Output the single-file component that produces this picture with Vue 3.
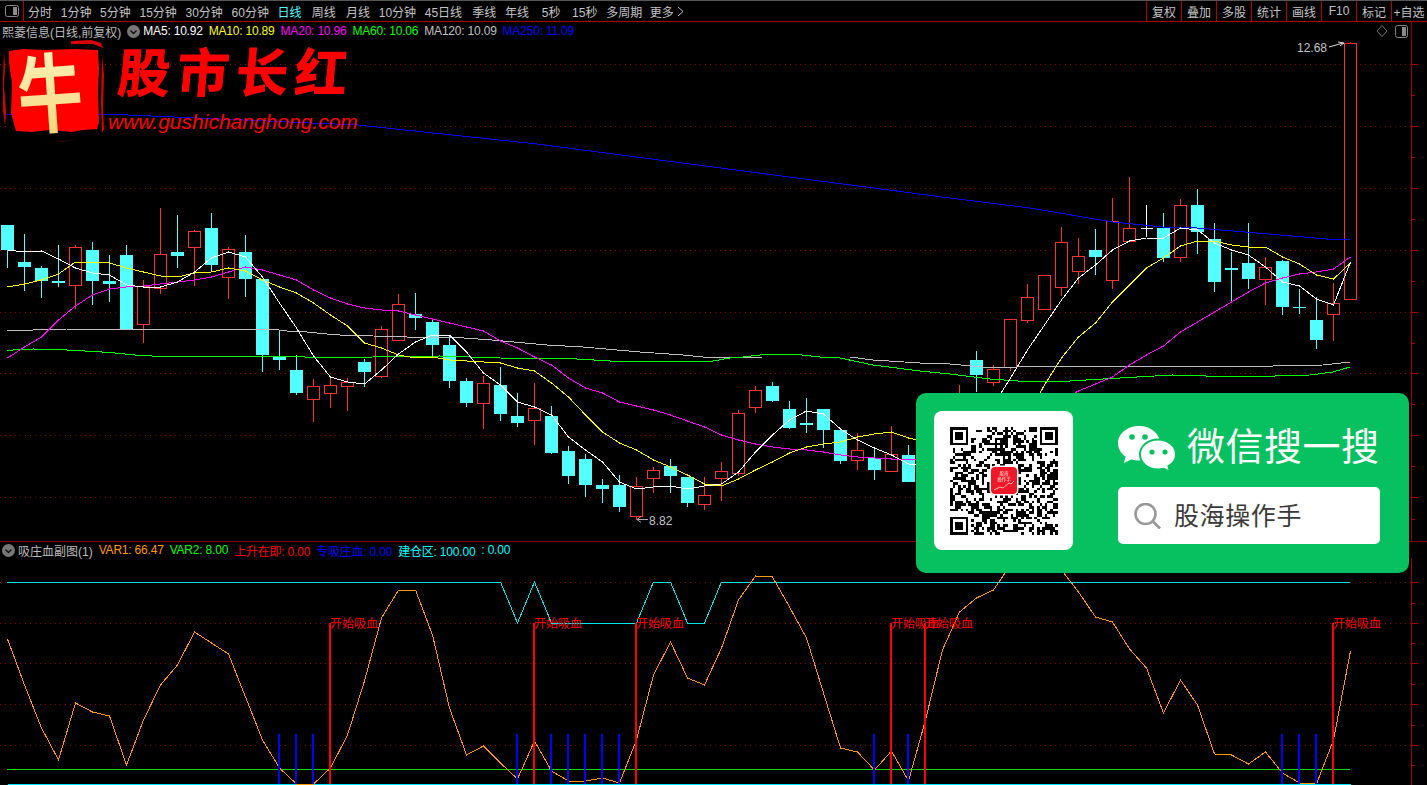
<script setup>
import { computed } from 'vue';

const periods = [
  { name: '分时' }, { name: '1分钟' }, { name: '5分钟' }, { name: '15分钟' }, { name: '30分钟' }, { name: '60分钟' },
  { name: '日线', cls: 'active' }, { name: '周线', cls: 'nudge' }, { name: '月线', cls: 'nudge' }, { name: '10分钟' },
  { name: '45日线' }, { name: '季线', cls: 'nudge' }, { name: '年线' }, { name: '5秒', cls: 'sec-a' }, { name: '15秒', cls: 'sec-b' }, { name: '多周期' },
];
const tools = ['复权', '叠加', '多股', '统计', '画线', 'F10', '标记', '+自选'];

const maLegend = [
  { text: 'MA5: 10.92', color: '#ffffff' },
  { text: 'MA10: 10.89', color: '#ffff00' },
  { text: 'MA20: 10.96', color: '#ff00ff' },
  { text: 'MA60: 10.06', color: '#00ff00' },
  { text: 'MA120: 10.09', color: '#c0c0c0' },
  { text: 'MA250: 11.09', color: '#0000ff' },
];

const subLegend = [
  { text: 'VAR1: 66.47', color: '#ff9900' },
  { text: 'VAR2: 8.00', color: '#00ff00' },
  { text: '上升在即: 0.00', color: '#ff0000' },
  { text: '专吸庄血: 0.00', color: '#0000ff' },
  { text: '建仓区: 100.00', color: '#00ffff' },
  { text: ': 0.00', color: '#00ffff' },
];

// 每根K线: [类型, 上影, 实体顶, 实体底, 下影]  c青 r红 w白
const candles = [
  ['c', 225, 225, 250, 268], ['c', 234, 262, 267, 291], ['c', 266, 268, 281, 298], ['c', 245, 281, 283, 287],
  ['r', 245, 247, 285, 309], ['c', 242, 250, 281, 305], ['c', 255, 281, 284, 302], ['c', 245, 255, 329, 329],
  ['r', 280, 286, 324, 343], ['r', 208, 254, 288, 294], ['c', 215, 252, 256, 268], ['r', 230, 231, 247, 286],
  ['c', 213, 228, 265, 272], ['r', 247, 249, 277, 299], ['c', 235, 252, 279, 297], ['c', 279, 279, 355, 372],
  ['c', 331, 356, 360, 370], ['c', 355, 370, 393, 395], ['r', 379, 386, 399, 422], ['r', 377, 385, 393, 408],
  ['r', 378, 382, 386, 411], ['c', 359, 362, 372, 387], ['r', 326, 329, 376, 378], ['r', 294, 304, 340, 340],
  ['c', 293, 314, 318, 330], ['c', 318, 322, 345, 357], ['c', 335, 345, 381, 388], ['c', 378, 381, 403, 407],
  ['r', 376, 383, 403, 429], ['c', 367, 385, 414, 421], ['c', 393, 416, 423, 427], ['r', 383, 408, 420, 445],
  ['c', 406, 416, 453, 454], ['c', 446, 451, 476, 484], ['c', 454, 459, 485, 497], ['c', 479, 485, 489, 503],
  ['c', 475, 485, 507, 512], ['r', 477, 486, 516, 520], ['r', 467, 470, 478, 493], ['c', 459, 466, 476, 493],
  ['c', 477, 477, 503, 507], ['r', 477, 495, 504, 510], ['r', 462, 471, 478, 501], ['r', 410, 413, 473, 476],
  ['r', 386, 390, 407, 413], ['c', 382, 386, 401, 402], ['c', 401, 409, 428, 429], ['c', 398, 423, 425, 433],
  ['c', 409, 409, 430, 448], ['c', 430, 430, 461, 464], ['r', 433, 450, 460, 470], ['c', 447, 458, 470, 480],
  ['r', 426, 454, 471, 471], ['c', 445, 455, 482, 482], ['r', 440, 450, 470, 480], ['c', 430, 440, 470, 490],
  ['r', 385, 410, 440, 450], ['c', 351, 360, 375, 392], ['r', 365, 369, 382, 386], ['r', 319, 319, 367, 371],
  ['r', 284, 297, 320, 323], ['r', 275, 275, 309, 309], ['r', 227, 242, 287, 296], ['r', 238, 256, 271, 284],
  ['c', 229, 250, 257, 275], ['r', 198, 221, 280, 289], ['r', 177, 228, 241, 241], ['w', 205, 228, 229, 237],
  ['c', 213, 228, 258, 262], ['r', 199, 205, 257, 262], ['c', 189, 205, 232, 254], ['c', 223, 239, 282, 292],
  ['c', 252, 268, 270, 303], ['c', 223, 263, 279, 289], ['r', 257, 267, 279, 305], ['c', 260, 261, 307, 315],
  ['c', 289, 307, 308, 314], ['c', 297, 320, 340, 349], ['r', 283, 303, 314, 341], ['r', 42, 43, 299, 299],
];

const cx = (i) => 7.5 + 17 * i;
const toPoints = (ys) => ys.map((y, i) => `${cx(i)},${y}`).join(' ');
const pairs = (arr) => arr.map((p) => p.join(',')).join(' ');

const ma5 = toPoints([250, 252, 251, 259, 268, 273, 275, 285, 287, 287, 282, 272, 258, 252, 257, 277, 303, 328, 356, 377, 382, 384, 370, 354, 342, 335, 335, 352, 373, 385, 402, 407, 415, 437, 450, 462, 482, 489, 487, 486, 489, 486, 484, 472, 452, 435, 420, 411, 414, 429, 440, 448, 455, 464, 465, 460, 450, 430, 405, 378, 350, 325, 300, 278, 265, 250, 241, 238, 238, 228, 230, 243, 250, 255, 267, 282, 286, 299, 305, 262]);
const ma10 = toPoints([287, 284, 280, 274, 262, 262, 263, 268, 272, 276, 277, 273, 272, 268, 271, 280, 287, 293, 303, 315, 326, 343, 348, 355, 358, 357, 360, 361, 362, 363, 368, 371, 383, 397, 415, 432, 443, 450, 460, 467, 475, 484, 486, 479, 470, 462, 453, 447, 444, 442, 437, 434, 432, 438, 442, 446, 450, 452, 450, 440, 415, 385, 358, 337, 323, 302, 285, 268, 258, 246, 241, 241, 245, 247, 247, 257, 264, 275, 279, 263]);
const ma20 = toPoints([358, 347, 337, 320, 306, 295, 289, 287, 286, 284, 282, 280, 277, 272, 267, 270, 275, 280, 290, 298, 304, 308, 310, 311, 315, 319, 323, 327, 331, 341, 348, 357, 365, 378, 388, 393, 402, 406, 410, 415, 421, 427, 435, 440, 444, 447, 449, 450, 452, 455, 457, 458, 459, 459, 460, 462, 462, 460, 450, 440, 425, 410, 400, 391, 384, 377, 365, 355, 346, 332, 322, 312, 302, 292, 283, 278, 274, 272, 269, 257]);
const ma60 = pairs([[7, 351], [13, 350], [33, 349], [67, 350], [85, 351], [102, 352], [115, 353], [135, 355], [152, 356], [220, 356], [287, 356], [305, 357], [322, 358], [373, 357], [440, 356], [500, 358], [577, 359], [610, 361], [713, 361], [730, 358], [743, 357], [768, 354], [793, 354], [820, 357], [840, 358], [873, 365], [920, 371], [950, 374], [990, 379], [1018, 381], [1070, 381], [1103, 379], [1172, 375], [1240, 377], [1310, 375], [1333, 372], [1350, 367]]);
const ma120 = pairs([[7, 331], [33, 330], [67, 329], [270, 329], [287, 331], [307, 332], [327, 334], [340, 335], [373, 336], [407, 337], [450, 337], [492, 340], [547, 345], [583, 347], [640, 352], [683, 355], [713, 358], [763, 357], [850, 357], [873, 360], [920, 363], [950, 364], [983, 367], [1017, 367], [1037, 366], [1155, 366], [1273, 366], [1323, 365], [1350, 362]]);
const ma250 = pairs([[7, 114], [105, 114], [358, 125], [537, 144], [950, 198], [1030, 208], [1113, 222], [1163, 227], [1197, 228], [1257, 233], [1327, 239], [1350, 240]]);

const var1 = toPoints([639, 685, 728, 760, 703, 712, 716, 765, 720, 685, 665, 632, 643, 654, 697, 740, 768, 784, 784, 768, 735, 681, 618, 590, 590, 635, 708, 755, 746, 763, 779, 741, 771, 781, 781, 778, 783, 740, 675, 642, 678, 685, 648, 600, 576, 577, 607, 638, 693, 748, 752, 770, 751, 781, 720, 650, 612, 598, 590, 565, 558, 555, 570, 592, 617, 622, 649, 668, 713, 680, 705, 754, 755, 764, 752, 773, 783, 784, 740, 651]);
const var2 = pairs([[7, 582], [500.5, 582], [517.5, 623], [534.5, 582], [551.5, 623], [636.5, 623], [653.5, 582], [670.5, 582], [687.5, 623], [704.5, 623], [721.5, 582], [1350, 582]]);

const mainGrid = [64, 126, 188, 250, 312, 373, 435, 497];
const mainMinor = [95, 157, 219, 281, 343, 404, 466, 519];
const subGrid = [582, 623, 663, 704, 745];
const subMinor = [603, 643, 684, 725, 765];
const blueBars = [16, 17, 18, 30, 32, 33, 34, 35, 36, 51, 53, 75, 76, 77];
const signals = [19, 31, 37, 52, 54, 78];

// 二维码模块用固定种子生成
const qrPath = computed(() => {
  const n = 41;
  let seed = 20240517;
  const rnd = () => {
    seed = (seed * 1664525 + 1013904223) >>> 0;
    return (seed >>> 16) / 65536;
  };
  const inFinder = (x, y, fx, fy) => x >= fx - 1 && x <= fx + 7 && y >= fy - 1 && y <= fy + 7;
  const finders = [[0, 0], [n - 7, 0], [0, n - 7]];
  let d = '';
  for (let y = 0; y < n; y++) {
    for (let x = 0; x < n; x++) {
      let on = false;
      const f = finders.find((p) => inFinder(x, y, p[0], p[1]));
      if (f) {
        const a = x - f[0];
        const b = y - f[1];
        const edge = a === 0 || a === 6 || b === 0 || b === 6;
        const core = a >= 2 && a <= 4 && b >= 2 && b <= 4;
        on = a >= 0 && a <= 6 && b >= 0 && b <= 6 && (edge || core);
      } else {
        on = rnd() > 0.5;
      }
      if (on) d += `M${x} ${y}h1v1h-1z`;
    }
  }
  return d;
});
</script>

<template>
  <div class="page">
    <div class="toolbar">
      <div class="panel-btn">
        <svg width="16" height="14" viewBox="0 0 16 14">
          <rect x="1.5" y="1.5" width="13" height="11" rx="2" fill="none" stroke="#8a8a8a" />
          <rect x="9" y="3" width="4" height="8" fill="#8a8a8a" />
        </svg>
      </div>
      <div class="periods">
        <span v-for="p in periods" :key="p.name" :class="p.cls">{{ p.name }}</span>
        <span class="more">更多
          <svg width="7" height="11" viewBox="0 0 7 11"><path d="M1 1l5 4.5-5 4.5" fill="none" stroke="#c4c4c4" /></svg>
        </span>
      </div>
      <div class="tools">
        <span v-for="t in tools" :key="t" class="tool">{{ t }}</span>
      </div>
    </div>

    <div class="legend">
      <span class="stock">熙菱信息(日线,前复权)</span>
      <span class="chev">
        <svg width="13" height="13" viewBox="0 0 13 13">
          <circle cx="6.5" cy="6.5" r="6.5" fill="#777" />
          <path d="M3.5 5.5l3 3 3-3" fill="none" stroke="#111" stroke-width="1.4" />
        </svg>
      </span>
      <span v-for="m in maLegend" :key="m.text" :style="{ color: m.color }">{{ m.text }}</span>
      <span class="legend-icons">
        <svg width="12" height="12" viewBox="0 0 12 12"><path d="M6 .5L11 6 6 11.5 1 6z" fill="none" stroke="#777" /></svg>
        <svg width="13" height="13" viewBox="0 0 13 13">
          <rect x=".5" y=".5" width="12" height="12" rx="2" fill="none" stroke="#888" />
          <rect x="7" y="2" width="4" height="9" fill="#888" />
        </svg>
      </span>
    </div>

    <svg class="chart" width="1427" height="501" viewBox="0 40 1427 501">
      <g shape-rendering="crispEdges">
        <line v-for="y in mainGrid" :key="y" x1="0" x2="1411" :y1="y + 0.5" :y2="y + 0.5" class="grid" />
        <line x1="1411.5" x2="1411.5" y1="40" y2="541" class="axis" />
        <line v-for="y in mainGrid" :key="'t' + y" x1="1412" x2="1418" :y1="y + 0.5" :y2="y + 0.5" class="axis" />
        <line v-for="y in mainMinor" :key="'m' + y" x1="1412" x2="1415" :y1="y + 0.5" :y2="y + 0.5" class="axis" />

        <g v-for="(c, i) in candles" :key="i">
          <template v-if="c[0] === 'c'">
            <line :x1="cx(i)" :x2="cx(i)" :y1="c[1]" :y2="c[4]" stroke="#54ffff" />
            <rect :x="cx(i) - 6.5" :y="c[2]" width="13" :height="c[3] - c[2]" fill="#54ffff" />
          </template>
          <template v-else-if="c[0] === 'r'">
            <line :x1="cx(i)" :x2="cx(i)" :y1="c[1]" :y2="c[4]" stroke="#ff3232" />
            <rect :x="cx(i) - 6" :y="c[2] + 0.5" width="12" :height="c[3] - c[2]" fill="#000" stroke="#ff3232" />
          </template>
          <template v-else>
            <line :x1="cx(i)" :x2="cx(i)" :y1="c[1]" :y2="c[4]" stroke="#fff" />
            <line :x1="cx(i) - 6" :x2="cx(i) + 6" :y1="c[2] + 0.5" :y2="c[2] + 0.5" stroke="#fff" />
          </template>
        </g>

        <polyline :points="ma250" fill="none" stroke="#0000ff" />
        <polyline :points="ma120" fill="none" stroke="#c0c0c0" />
        <polyline :points="ma60" fill="none" stroke="#00ff00" />
        <polyline :points="ma20" fill="none" stroke="#ff00ff" />
        <polyline :points="ma10" fill="none" stroke="#ffff00" />
        <polyline :points="ma5" fill="none" stroke="#ffffff" />
      </g>

      <text x="1297" y="52" class="price">12.68</text>
      <path d="M1329 47l14-4m-5-1l6 1-4 3" fill="none" stroke="#ddd" />
      <text x="649" y="525" class="price">8.82</text>
      <path d="M648 519.5h-11m4-3l-4 3 4 3" fill="none" stroke="#aaa" />
    </svg>

    <div class="legend sub">
      <span class="chev">
        <svg width="13" height="13" viewBox="0 0 13 13">
          <circle cx="6.5" cy="6.5" r="6.5" fill="#777" />
          <path d="M3.5 5.5l3 3 3-3" fill="none" stroke="#111" stroke-width="1.4" />
        </svg>
      </span>
      <span class="stock">吸庄血副图(1)</span>
      <span v-for="m in subLegend" :key="m.text" :style="{ color: m.color }">{{ m.text }}</span>
    </div>

    <svg class="chart" width="1427" height="227" viewBox="0 558 1427 227">
      <defs>
        <clipPath id="sub-clip"><rect x="0" y="558" width="1427" height="227" /></clipPath>
      </defs>
      <g shape-rendering="crispEdges" clip-path="url(#sub-clip)">
        <line v-for="y in subGrid" :key="y" x1="0" x2="1411" :y1="y + 0.5" :y2="y + 0.5" class="grid" />
        <line x1="1411.5" x2="1411.5" y1="558" y2="785" class="axis" />
        <line v-for="y in subGrid" :key="'t' + y" x1="1412" x2="1418" :y1="y + 0.5" :y2="y + 0.5" class="axis" />
        <line v-for="y in subMinor" :key="'m' + y" x1="1412" x2="1415" :y1="y + 0.5" :y2="y + 0.5" class="axis" />

        <line x1="7" x2="1350" y1="769.5" y2="769.5" stroke="#00dd00" />
        <line x1="8" x2="1351" y1="784.5" y2="784.5" stroke="#00e5ff" />
        <polyline :points="var2" fill="none" stroke="#00e5e5" />
        <polyline :points="var1" fill="none" stroke="#ff9900" />
        <rect v-for="i in blueBars" :key="'b' + i" :x="cx(i) - 1.5" y="734" width="2" height="50" fill="#0000ff" />
        <rect v-for="i in signals" :key="'s' + i" :x="cx(i) - 1.5" y="623" width="2" height="161" fill="#ff0000" />
      </g>
      <text v-for="i in signals" :key="'l' + i" :x="cx(i) - 0.5" y="628" class="signal">开始吸血</text>
    </svg>

    <!-- 左上水印 -->
    <div class="logo">
      <svg class="logo-mark" width="104" height="104" viewBox="0 0 104 104">
        <defs>
          <linearGradient id="niu" x1="0" y1="0" x2="0" y2="1">
            <stop offset="0" stop-color="#fff2b8" />
            <stop offset="1" stop-color="#f3d377" />
          </linearGradient>
        </defs>
        <path d="M8 13l14-2 22 1 30-1 23 1 1 18-1 24 1 30-2 7-14 1-11 2-22-2-18 2-16-1-5-18 1-30-3-20z" fill="#ff0000" />
        <path d="M70 3l20-1 10 3 2 5-10-4-22 0zM3 14l1 14-1 20 2 26-1 14-2-16 0-34zM101 17l2 20-1 34 1 20-2 4-1-30zM34 103l24 1 18-3-16 3z" fill="#d80000" />
        <text class="niu" transform="translate(19 90) rotate(-4) scale(.9 1.2)">牛</text>
      </svg>
      <div class="logo-text">
        <div class="logo-title">股市长红</div>
        <div class="logo-url">www.gushichanghong.com</div>
      </div>
    </div>

    <!-- 微信搜一搜卡片 -->
    <div class="wechat-card">
      <div class="qr-box">
        <div class="qr">
          <svg width="108" height="108" viewBox="0 0 41 41" shape-rendering="crispEdges">
            <path :d="qrPath" fill="#000" />
          </svg>
          <div class="qr-logo">
            <svg width="26" height="27" viewBox="0 0 26 27">
              <text x="13" y="8" class="qr-text">股海</text>
              <text x="13" y="14" class="qr-text">操作手</text>
              <path d="M3 23l6-3 3 1 6-5 2 1 3-3" fill="none" stroke="#ffe0c0" stroke-width="0.8" />
            </svg>
          </div>
        </div>
      </div>
      <div class="card-right">
        <div class="card-head">
          <svg width="58" height="46" viewBox="0 0 58 46">
            <path d="M21 0C9.4 0 0 7.7 0 17.2c0 5.4 3 10.2 7.7 13.4L5.8 37l7.4-3.6c2.5.7 5 1 7.8 1 11.6 0 21-7.7 21-17.2S32.6 0 21 0z" fill="#fff" />
            <path d="M40 13.5c-9.8 0-18 6.6-18 15s8.2 15 18 15c2 0 3.9-.3 5.7-.8L52 46l-1.5-5.8c4.6-2.7 7.5-6.9 7.5-11.7 0-8.4-8.2-15-18-15z" fill="#fff" stroke="#07c160" stroke-width="2" />
            <circle cx="14" cy="11" r="2.8" fill="#07c160" />
            <circle cx="27" cy="11" r="2.8" fill="#07c160" />
            <circle cx="34" cy="26" r="2.6" fill="#07c160" />
            <circle cx="47" cy="26" r="2.6" fill="#07c160" />
          </svg>
          <span class="card-title">微信搜一搜</span>
        </div>
        <div class="search-box">
          <svg width="28" height="26" viewBox="0 0 28 26">
            <circle cx="11.5" cy="11" r="10" fill="none" stroke="#999" stroke-width="2.6" />
            <path d="M19 18.5l7 7" stroke="#999" stroke-width="2.8" />
          </svg>
          <span class="search-text">股海操作手</span>
        </div>
      </div>
    </div>
  </div>
</template>

<style scoped>
.page {
  position: relative;
  width: 1427px;
  height: 785px;
  overflow: hidden;
  background: #000;
  font-family: "Liberation Sans", "Noto Sans CJK SC", sans-serif;
  font-size: 12px;
  color: #c4c4c4;
}

.toolbar {
  display: flex;
  align-items: center;
  height: 22px;
  box-sizing: border-box;
  border-top: 1px solid #555;
  border-bottom: 1px solid #b00000;
}
.panel-btn {
  display: flex;
  align-items: center;
  justify-content: center;
  width: 23px;
  height: 100%;
  border-right: 1px solid #b00000;
}
.periods {
  display: flex;
  align-items: center;
  gap: 8.7px;
  margin-left: 4px;
  white-space: nowrap;
}
.periods .active { color: #54ffff; }
.periods .nudge { margin-left: 1.5px; }
.periods .sec-a { margin-left: 4px; }
.periods .sec-b { margin-left: 3px; }
.more { display: flex; align-items: center; gap: 3px; margin-left: -1px; }

.tools {
  display: flex;
  margin-left: auto;
  margin-right: 1px;
  height: 100%;
}
.tool {
  display: flex;
  align-items: center;
  justify-content: center;
  box-sizing: border-box;
  width: 35px;
  border-left: 1px solid #b00000;
}

.legend {
  display: flex;
  align-items: center;
  gap: 6px;
  height: 18px;
  width: 1412px;
  box-sizing: border-box;
  padding-left: 2px;
  border-right: 1px solid #900000;
  white-space: nowrap;
  letter-spacing: -0.2px;
}
.legend.sub {
  height: 17px;
  width: 100%;
  border-right: none;
  border-top: 1px solid #800000;
}
.stock { color: #bdbdbd; letter-spacing: 0; }
.chev { display: flex; margin-right: -3px; }
.legend-icons {
  display: flex;
  align-items: center;
  gap: 7px;
  margin-left: auto;
  margin-right: 3px;
}

.chart { display: block; overflow: visible; }
.grid { stroke: #8c0000; stroke-dasharray: 1 4; }
.axis { stroke: #a00000; }
.price { fill: #c4c4c4; font-size: 12px; }
.signal { fill: #ff0000; font-size: 12px; }

.logo {
  position: absolute;
  left: 1px;
  top: 38px;
  display: flex;
}
.logo-mark { flex: none; overflow: visible; }
.logo-text {
  display: flex;
  flex-direction: column;
  align-items: flex-start;
  margin-left: 3px;
  padding-top: 3px;
}
.logo-title {
  margin-left: 10px;
  height: 68px;
  line-height: 66px;
  font-size: 52px;
  font-weight: 700;
  letter-spacing: 7px;
  color: #ff0000;
  -webkit-text-stroke: 1px #ff0000;
  transform: skewX(-5deg);
  white-space: nowrap;
}
.logo-url {
  font-family: "Liberation Sans", sans-serif;
  font-style: italic;
  font-size: 21px;
  line-height: 26px;
  color: #ff0000;
}
.niu {
  font-size: 72px;
  font-weight: 700;
  fill: url(#niu);
}

.wechat-card {
  position: absolute;
  left: 916px;
  top: 393px;
  box-sizing: border-box;
  width: 493px;
  height: 180px;
  padding: 18px 0 0 18px;
  display: flex;
  gap: 45px;
  background: #07c160;
  border-radius: 10px;
}
.qr-box {
  position: relative;
  display: flex;
  align-items: center;
  justify-content: center;
  width: 139px;
  height: 139px;
  border-radius: 8px;
  background: #fff;
}
.qr { position: relative; display: flex; filter: blur(0.3px); }
.qr-logo {
  position: absolute;
  left: 41px;
  top: 40px;
  width: 26px;
  height: 27px;
  border-radius: 4px;
  background: #f01828;
  box-shadow: 0 0 0 1.5px #fff;
}
.qr-logo svg { display: block; }
.qr-text { fill: #ffe9e0; font-size: 4.5px; text-anchor: middle; }

.card-right {
  display: flex;
  flex-direction: column;
  width: 262px;
}
.card-head {
  display: flex;
  align-items: center;
  gap: 11px;
  height: 76px;
}
.card-title {
  font-family: "Noto Sans CJK SC", sans-serif;
  font-size: 38px;
  letter-spacing: 0.5px;
  margin-bottom: 12px;
  color: #fff;
  white-space: nowrap;
}
.search-box {
  display: flex;
  align-items: center;
  gap: 12px;
  height: 57px;
  padding-left: 16px;
  border-radius: 5px;
  background: #fff;
}
.search-text {
  font-family: "Noto Sans CJK SC", sans-serif;
  font-size: 25px;
  letter-spacing: 0.6px;
  margin-bottom: 3px;
  color: #3a3a3a;
}
</style>
